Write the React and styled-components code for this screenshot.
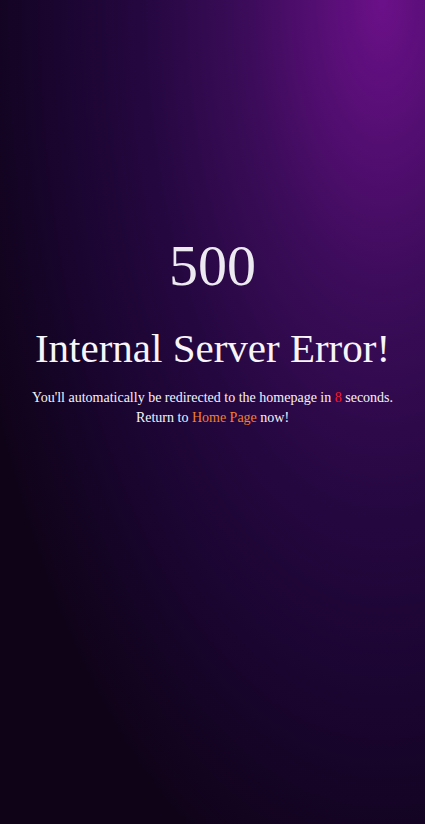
import styled, { createGlobalStyle } from "styled-components";

const GlobalStyle = createGlobalStyle`
  html, body {
    margin: 0;
    padding: 0;
  }
  body {
    background: #0f0318;
    font-family: "Liberation Serif", "Times New Roman", serif;
  }
`;

const Page = styled.div`
  min-height: 100vh;
  box-sizing: border-box;
  padding-top: 237px;
  text-align: center;
  color: #f2f0f5;
  background: radial-gradient(
    ellipse farthest-corner at 90% 0%,
    #6b1089 0%,
    #3c0c5a 25%,
    #24073f 45%,
    #1a0530 60%,
    #0f0318 80%
  );
`;

const Code = styled.h1`
  margin: 0;
  font-size: 58px;
  line-height: 58px;
  font-weight: 400;
  color: #ece9f0;
`;

const Title = styled.h2`
  margin: 33px 0 0;
  font-size: 41px;
  line-height: 41px;
  font-weight: 400;
  color: #f7f5fa;
`;

const Message = styled.p`
  margin: 19px 0 0;
  font-size: 14px;
  line-height: 20px;
  color: #f5f3f8;
`;

const Counter = styled.span`
  color: #ff1622;
`;

const HomeLink = styled.a`
  color: #f27f2a;
  text-decoration: none;
  cursor: pointer;
`;

export default function App() {
  return (
    <>
      <GlobalStyle />
      <Page>
        <Code>500</Code>
        <Title>Internal Server Error!</Title>
        <Message>
          You'll automatically be redirected to the homepage in <Counter>8</Counter> seconds.
          <br />
          Return to <HomeLink href="#">Home Page</HomeLink> now!
        </Message>
      </Page>
    </>
  );
}
